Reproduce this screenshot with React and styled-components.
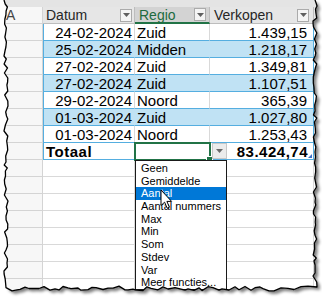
import React from "react";
import styled, { createGlobalStyle } from "styled-components";

const GlobalStyle = createGlobalStyle`
  html, body {
    margin: 0;
    padding: 0;
    background: #fff;
  }
  body {
    width: 322px;
    height: 299px;
    overflow: hidden;
  }
`;

const ROWS = [
  ["24-02-2024", "Zuid", "1.439,15"],
  ["25-02-2024", "Midden", "1.218,17"],
  ["27-02-2024", "Zuid", "1.349,81"],
  ["27-02-2024", "Zuid", "1.107,51"],
  ["29-02-2024", "Noord", "365,39"],
  ["01-03-2024", "Zuid", "1.027,80"],
  ["01-03-2024", "Noord", "1.253,43"],
];

const OPTIONS = [
  "Geen",
  "Gemiddelde",
  "Aantal",
  "Aantal nummers",
  "Max",
  "Min",
  "Som",
  "Stdev",
  "Var",
  "Meer functies...",
];

// torn paper edge, seeded so it looks the same every run
const makeEdge = () => {
  let s = 11;
  const rnd = () => {
    s = (s * 16807) % 2147483647;
    return s / 2147483647;
  };
  const pts = [];
  for (let y = 0; y <= 284; y += 3 + Math.floor(rnd() * 4)) {
    pts.push([4 + rnd() * 4, y]);
  }
  for (let x = 6; x <= 311; x += 3 + Math.floor(rnd() * 5)) {
    pts.push([x, 286 + rnd() * 5]);
  }
  for (let y = 287; y >= 0; y -= 3 + Math.floor(rnd() * 4)) {
    pts.push([313 + rnd() * 4, y]);
  }
  pts.push([315, 0]);
  return pts;
};

const EDGE = makeEdge();
const edgePath = "M" + EDGE.map(([x, y]) => `${x.toFixed(1)},${y.toFixed(1)}`).join("L");
const edgeClip = `polygon(${EDGE.map(([x, y]) => `${x.toFixed(1)}px ${y.toFixed(1)}px`).join(",")})`;

const Frame = styled.div`
  position: relative;
  width: 322px;
  height: 299px;
  background: #fff;
  overflow: hidden;
  font-family: "Liberation Sans", Arial, sans-serif;
`;

const Overlay = styled.svg`
  position: absolute;
  left: 0;
  top: 0;
  z-index: ${(p) => p.$z};
  pointer-events: none;
`;

const Sheet = styled.div`
  position: relative;
  z-index: 1;
  width: 322px;
  height: 299px;
  background: #fff;
  overflow: hidden;
`;

const TopStrip = styled.div`
  height: 7px;
  background: #e4e4e4;
`;

const Row = styled.div`
  display: grid;
  grid-template-columns: 43px 92px 75px 104px 8px;
  height: 17px;
`;

const RowHead = styled.div`
  box-sizing: border-box;
  height: 17px;
  padding-left: 6px;
  font-size: 14px;
  line-height: 16px;
  color: #444;
  background: #f7f7f7;
  border-right: 1px solid #d4d4d4;
  border-bottom: 1px solid #d4d4d4;
`;

const HeadCell = styled.div`
  box-sizing: border-box;
  height: 17px;
  display: flex;
  align-items: center;
  justify-content: space-between;
  padding: 0 ${(p) => p.$pr || 2}px 0 ${(p) => p.$pl || 2}px;
  font-size: 14px;
  background: ${(p) => (p.$active ? "#d3d3d3" : "#e6e6e6")};
  color: ${(p) => (p.$active ? "#1d6b3f" : "#262626")};
  border-right: 1px solid #bdbdbd;
  border-bottom: ${(p) => (p.$active ? "2px solid #217346" : "1px solid #bdbdbd")};
`;

const FilterButton = styled.span`
  box-sizing: border-box;
  width: 12px;
  height: 13px;
  display: flex;
  align-items: center;
  justify-content: center;
  border: 1px solid #ababab;
  background: #f4f4f4;
`;

const Cell = styled.div`
  position: relative;
  box-sizing: border-box;
  height: 17px;
  display: flex;
  align-items: center;
  justify-content: ${(p) => (p.$right ? "flex-end" : "flex-start")};
  padding: 0 ${(p) => p.$pr || 2}px 0 ${(p) => p.$pl || 2}px;
  font-size: 15px;
  font-weight: ${(p) => (p.$bold ? 700 : 400)};
  letter-spacing: ${(p) => (p.$bold ? "0.5px" : "0")};
  color: #000;
  white-space: nowrap;
  background: ${(p) => (p.$band ? "#c0e2f4" : "#fff")};
  border-bottom: 1px solid ${(p) => (p.$blue ? "#55aee0" : "#d9d9d9")};
  border-right: 1px solid
    ${(p) => (p.$edge ? "#55aee0" : p.$band ? "transparent" : "#d9d9d9")};
  border-left: ${(p) => (p.$first ? "1px solid #55aee0" : "none")};
`;

const Selection = styled.div`
  position: absolute;
  left: -1px;
  top: -1px;
  width: 77px;
  height: 19px;
  box-sizing: border-box;
  border: 2px solid #217346;
  z-index: 3;
`;

const FillHandle = styled.span`
  position: absolute;
  right: -4px;
  bottom: -4px;
  width: 5px;
  height: 5px;
  background: #217346;
  border: 1px solid #fff;
`;

const CellDrop = styled.div`
  position: absolute;
  left: 77px;
  top: 0;
  width: 15px;
  height: 16px;
  box-sizing: border-box;
  display: flex;
  align-items: center;
  justify-content: center;
  background: #ececec;
  border: 1px solid #c8c8c8;
  z-index: 3;
`;

const ResizeCorner = styled.svg`
  position: absolute;
  right: 1px;
  bottom: 1px;
`;

const List = styled.div`
  position: absolute;
  left: 135px;
  top: 160px;
  width: 92px;
  box-sizing: border-box;
  padding-top: 1px;
  background: #fff;
  border: 1px solid #1a1a1a;
  z-index: 4;
  font-family: "Liberation Sans", Arial, sans-serif;
  font-size: 11px;
`;

const Option = styled.div`
  height: 12.7px;
  line-height: 12.7px;
  padding-left: 5px;
  white-space: nowrap;
  color: ${(p) => (p.$hot ? "#fff" : "#000")};
  background: ${(p) => (p.$hot ? "#0078d7" : "transparent")};
`;

const Cursor = styled.svg`
  position: absolute;
  left: 160px;
  top: 189px;
  z-index: 5;
`;

const Arrow = ({ color = "#5f5f5f" }) => (
  <svg width="7" height="4" viewBox="0 0 7 4">
    <path d="M0 0H7L3.5 4Z" fill={color} />
  </svg>
);

export default function App() {
  return (
    <Frame>
      <GlobalStyle />
      <Overlay $z={0} width="322" height="299">
        <defs>
          <filter id="soft" x="-5%" y="-5%" width="110%" height="110%">
            <feGaussianBlur stdDeviation="1.6" />
          </filter>
        </defs>
        <path
          d={edgePath + "Z"}
          transform="translate(3 3)"
          fill="rgba(0,0,0,0.5)"
          filter="url(#soft)"
        />
      </Overlay>

      <Sheet style={{ clipPath: edgeClip }}>
        <TopStrip />
        <Row>
          <RowHead>A</RowHead>
          <HeadCell $pl={3}>
            Datum
            <FilterButton>
              <Arrow />
            </FilterButton>
          </HeadCell>
          <HeadCell $active $pl={4} $pr={3}>
            Regio
            <FilterButton>
              <Arrow />
            </FilterButton>
          </HeadCell>
          <HeadCell $pl={4} $pr={4}>
            Verkopen
            <FilterButton>
              <Arrow />
            </FilterButton>
          </HeadCell>
          <HeadCell />
        </Row>

        {ROWS.map(([date, region, amount], i) => {
          const band = i % 2 === 1;
          return (
            <Row key={i}>
              <RowHead />
              <Cell $first $band={band} $blue $right>
                {date}
              </Cell>
              <Cell $band={band} $blue>
                {region}
              </Cell>
              <Cell $band={band} $blue $edge $right $pr={6}>
                {amount}
              </Cell>
              <Cell />
            </Row>
          );
        })}

        <Row>
          <RowHead />
          <Cell $first $blue $bold>
            Totaal
          </Cell>
          <Cell $blue>
            <Selection>
              <FillHandle />
            </Selection>
            <CellDrop>
              <Arrow color="#6a6a6a" />
            </CellDrop>
          </Cell>
          <Cell $blue $edge $right $bold $pr={5}>
            83.424,74
            <ResizeCorner width="4" height="4" viewBox="0 0 4 4">
              <path d="M4 0V4H0Z" fill="#3f6fc4" />
            </ResizeCorner>
          </Cell>
          <Cell />
        </Row>

        {Array.from({ length: 8 }).map((_, i) => (
          <Row key={"e" + i}>
            <RowHead />
            <Cell />
            <Cell />
            <Cell />
            <Cell />
          </Row>
        ))}

        <List>
          {OPTIONS.map((o) => (
            <Option key={o} $hot={o === "Aantal"}>
              {o}
            </Option>
          ))}
        </List>

        <Cursor width="13" height="21" viewBox="0 0 13 21">
          <path
            d="M1 1V16.5L4.6 13.2L7.2 19.2L9.4 18.2L6.9 12.4H11.6Z"
            fill="#fff"
            stroke="#000"
            strokeWidth="1"
            strokeLinejoin="round"
          />
        </Cursor>
      </Sheet>

      <Overlay $z={2} width="322" height="299">
        <path
          d={edgePath}
          fill="none"
          stroke="#000"
          strokeWidth="1.3"
          strokeLinejoin="round"
        />
      </Overlay>
    </Frame>
  );
}
